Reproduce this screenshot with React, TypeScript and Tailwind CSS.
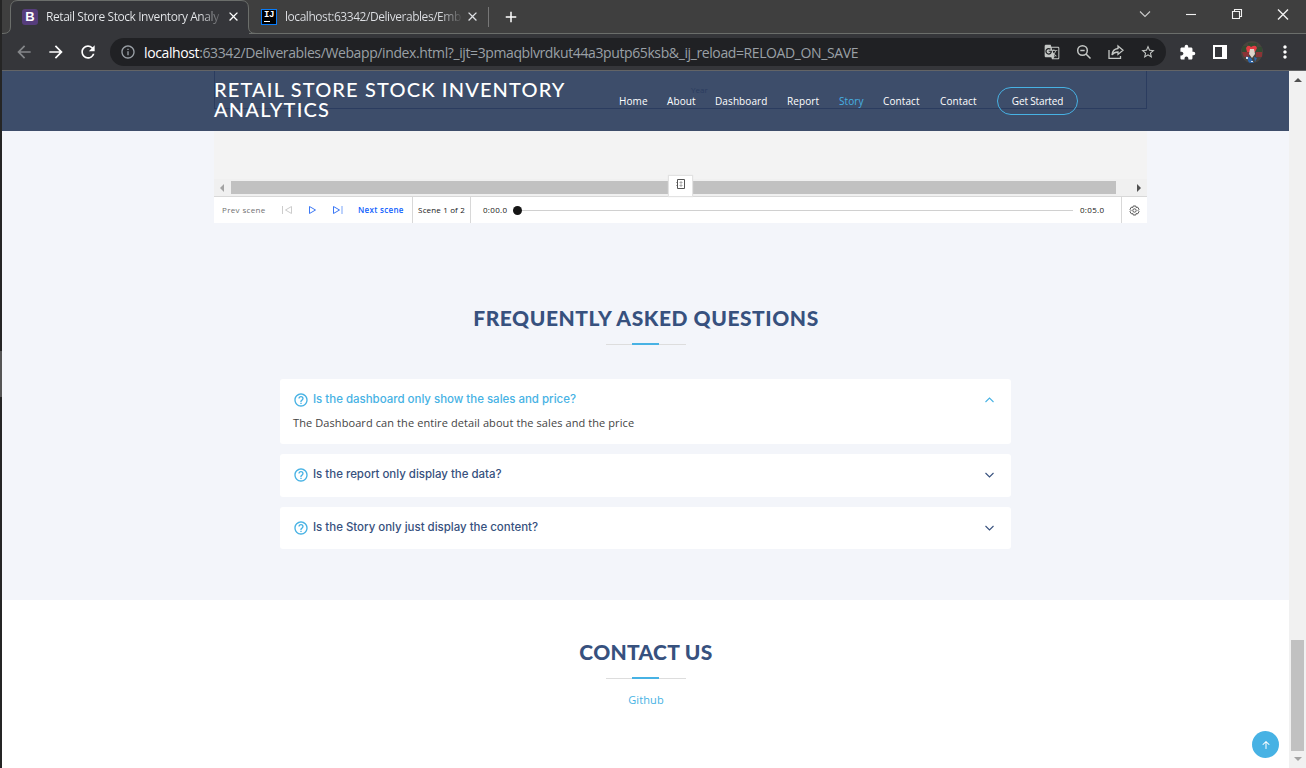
import React from "react";
import {
  BsArrowUpShort,
} from "react-icons/bs";
import { BiHelpCircle } from "react-icons/bi";
import {
  MdArrowBack,
  MdArrowForward,
  MdRefresh,
  MdInfoOutline,
  MdGTranslate,
  MdStarBorder,
  MdExtension,
  MdMoreVert,
  MdClose,
  MdAdd,
} from "react-icons/md";

const sans = "font-['Open_Sans',sans-serif]";

function Tabs() {
  return (
    <div className="flex h-[34px] shrink-0 bg-[#3f3f3f]">
      <svg className="h-[34px] w-[258px] shrink-0 -mr-[258px]" viewBox="0 0 258 34" fill="#35363a" stroke="#6b6e6b">
        <path d="M-2 33.5H1Q8.500 33.500 8.500 27V8Q8.500 .5 16 .5H239Q246.500 .5 246.500 8V27Q246.500 33.500 254 33.500H258V36H-2Z" />
      </svg>
      <div className="relative flex h-[33px] w-[247px] shrink-0 items-center pl-5">
        <div className="flex h-4 w-4 items-center justify-center rounded-[3px] bg-[#563d7c] font-['Liberation_Sans',sans-serif] text-[13px] font-bold text-white">B</div>
        <div className="ml-2 w-[176px] whitespace-nowrap bg-gradient-to-r from-[#e8eaed] from-88% to-[#e8eaed]/10 bg-clip-text text-[12px] tracking-[-0.43px] text-transparent">Retail Store Stock Inventory Analy</div>
        <MdClose className="ml-[4px] h-[15px] w-[15px] text-white" />
      </div>
      <div className="flex flex-1 items-center border-b border-[#6b6e6b]">
        <div className="ml-[12px] flex h-4 w-4 flex-col border border-[#087cfa] bg-black pl-[2px] pt-px font-['Liberation_Mono',monospace] text-[9px] font-bold leading-[9px] text-white">
          <span className="tracking-[-0.5px]">IJ</span>
          <span className="mt-px h-px w-[6px] bg-white" />
        </div>
        <div className="ml-2 w-[176px] whitespace-nowrap bg-gradient-to-r from-[#dfe1e5] from-88% to-[#dfe1e5]/10 bg-clip-text text-[12px] tracking-[-0.45px] text-transparent">localhost:63342/Deliverables/Emb</div>
        <MdClose className="ml-[4px] h-[15px] w-[15px] text-[#dfe1e5]" />
        <div className="ml-[8px] h-5 w-px bg-[#777]" />
        <MdAdd className="ml-[13px] h-[18px] w-[18px] text-white" />
        <svg className="ml-auto mr-[17px] mb-[5px] h-4 w-[152px]" viewBox="0 0 152 16" fill="none" stroke="#f1f1f1" strokeWidth="1.1">
          <path d="M3 5.500l5 5 5-5" stroke="#ccc" />
          <path d="M49 8.500h10" />
          <path d="M95.500 5.500h7v7h-7zM97.500 5.500v-2h7v7h-2" />
          <path d="M141 3.500l10 10M151 3.500l-10 10" strokeWidth="1.400" />
        </svg>
      </div>
    </div>
  );
}

function Toolbar() {
  return (
    <div className="flex h-[37px] shrink-0 items-center border-b border-[#636466] bg-[#35363a] pl-3">
      <MdArrowBack className="h-5 w-5 text-[#85878a]" />
      <MdArrowForward className="ml-3 h-5 w-5 text-white" />
      <MdRefresh className="ml-3 h-5 w-5 text-white" />
      <div className="ml-[12px] flex h-7 w-[1056px] items-center rounded-full bg-[#202124] pl-[10px] pr-[10px] text-[#9aa0a6]">
        <MdInfoOutline className="h-4 w-4" />
        <div className="ml-[8px] whitespace-nowrap text-[14px] tracking-[-0.39px]">
          <span className="text-white">localhost</span>:63342/Deliverables/Webapp/index.html?_ijt=3pmaqblvrdkut44a3putp65ksb&amp;_ij_reload=RELOAD_ON_SAVE
        </div>
        <div className="ml-auto flex items-center gap-4 text-[#c4c7c5]">
          <MdGTranslate className="h-4 w-4" />
          <svg className="h-4 w-4" viewBox="0 0 16 16" fill="none" stroke="currentColor" strokeWidth="1.500">
            <circle cx="6.500" cy="6.500" r="4.800" />
            <path d="M10 10l4.500 4.500M4.300 6.500h4.400" />
          </svg>
          <svg className="h-4 w-4" viewBox="0 0 16 16" fill="none" stroke="currentColor" strokeWidth="1.300">
            <path d="M1 6v8.300h11.500V12" />
            <path d="M10 2l5 4.200-5 4.200V8Q6 8 4 11Q4.500 5 10 4.500Z" />
          </svg>
          <MdStarBorder className="h-4 w-4" />
        </div>
      </div>
      <MdExtension className="ml-[13px] h-[17px] w-[17px] text-white" />
      <div className="ml-[17px] h-[14px] w-[14px] border-2 border-r-[5px] border-white" />
      <svg className="ml-[14px] h-[22px] w-[22px] rounded-full" viewBox="0 0 22 22">
        <path fill="#48443e" d="M0 0h22v22H0z" />
        <path fill="#334a32" d="M1 5h6V2h9v4h5v5H1z" />
        <path fill="#8a3436" d="M1 11h7v5H3zM15 11h6v5h-6z" />
        <path fill="#e33c43" d="M5 7q2-4 5-1q5-3 6 1l-2 4H6z" />
        <path fill="#ddd5ca" d="M9 8h4l1 5-3 4-3-4z" />
        <path fill="#2d67ad" d="M5 15l5 2 3 5H8zM13 16l3 1-2 4z" />
        <path fill="#d9e5ee" d="M5 16h2v2H5zM10 20h2v1h-2z" />
      </svg>
      <MdMoreVert className="ml-[12px] h-5 w-5 text-white" />
    </div>
  );
}

function Divider() {
  return (
    <div className="flex h-[3px] w-20 items-center">
      <div className="h-px w-[26px] bg-[#ddd]" />
      <div className="-mt-px h-[2px] w-[27px] bg-[#47b2e4]" />
      <div className="h-px w-[27px] bg-[#ddd]" />
    </div>
  );
}

function Header() {
  return (
    <header className="relative flex h-[60px] bg-[#3d4d6a] text-white">
      <div className="absolute left-[212px] top-0 h-[38px] w-[933px] border border-t-0 border-[#2b3c5f]" />
      <div className="absolute left-[689px] top-[14px] text-[8px] leading-[10px] text-[#2b3c5f]">Year</div>
      <h1 className="relative ml-[212px] mt-[8px] w-[405px] whitespace-nowrap font-['Lato',sans-serif] text-[20px] font-medium leading-[20px] tracking-[1.15px]">
        RETAIL STORE STOCK INVENTORY<br /><span className="tracking-[1.2px]">ANALYTICS</span>
      </h1>
      <nav className="relative mt-[23px] flex h-[14px] whitespace-nowrap text-[10px] font-medium leading-[14px] tracking-[0.1px]">
        <a className="w-[48px]">Home</a>
        <a className="w-[48px]">About</a>
        <a className="w-[72px]">Dashboard</a>
        <a className="w-[52px]">Report</a>
        <a className="w-[44px] text-[#47b2e4]">Story</a>
        <a className="w-[57px]">Contact</a>
        <a className="w-[57px]">Contact</a>
      </nav>
      <a className="relative mt-[16px] flex h-7 w-[81px] items-center justify-center rounded-full border border-[#47b2e4] text-[10px] font-medium tracking-[-0.15px]">Get Started</a>
    </header>
  );
}

function Player() {
  return (
    <div className="ml-[212px] w-[933px]">
      <div className="h-[48px] bg-[#f3f3f3]" />
      <div className="relative flex h-[17px] items-center bg-[#f0f0f0]">
        <div className="ml-[6px] border-y-4 border-r-[4px] border-y-transparent border-r-[#a3a3a3]" />
        <div className="ml-[7px] h-[13px] w-[885px] bg-[#c1c1c1]" />
        <div className="ml-[21px] border-y-4 border-l-[4px] border-y-transparent border-l-[#505050]" />
        <div className="absolute -top-[3px] left-[455px] flex h-[20px] w-[23px] items-start justify-center bg-white pt-[3px] shadow-[0_0_1px_1px_#e2e2e2]">
          <svg className="h-[10px] w-[9px]" viewBox="0 0 9 10" fill="none" stroke="#555">
            <path d="M1.500 .5h7v9h-7z" />
            <path d="M3.500 3.500h3M3.500 6.500h3M5 2v6M0 3.500h1M0 6.500h1" stroke="#aaa" />
          </svg>
        </div>
      </div>
      <div className="flex h-[27px] items-center whitespace-nowrap border-t border-[#d8d8d8] bg-white text-[8px] font-medium text-[#161616]">
        <span className="ml-[8px] w-[60px] tracking-[0.35px] text-[#6f6f6f]">Prev scene</span>
        <svg className="h-[10px] w-[64px]" viewBox="0 0 64 10" fill="none" strokeWidth="1">
          <path d="M.5 1v8M9.500 1.500v7L3.500 5z" stroke="#ccc" />
          <path d="M27.500 1.500v7l6-3.500z" stroke="#3b78f6" />
          <path d="M51.500 1.500v7l6-3.500z" stroke="#3b78f6" />
          <path d="M60 1v8" stroke="#a6c3fb" strokeWidth="1.500" />
        </svg>
        <span className="ml-[12px] w-[54px] font-semibold tracking-[0.3px] text-[#0f62fe]">Next scene</span>
        <span className="flex h-full w-[59px] items-center justify-center border-x border-[#d8d8d8] tracking-[0.15px]">Scene 1 of 2</span>
        <span className="ml-[12px] w-[30px] tracking-[0.3px]">0:00.0</span>
        <span className="h-[9px] w-[9px] rounded-full bg-[#161616]" />
        <span className="h-px w-[551px] bg-[#d0d0d0]" />
        <span className="ml-[7px] tracking-[0.3px]">0:05.0</span>
        <span className="ml-auto flex h-full w-[26px] items-center justify-center border-l border-[#d8d8d8]">
          <svg className="h-[11px] w-[11px]" viewBox="0 0 11 11" fill="none" stroke="#555">
            <path d="M4.200 1h2.600l.4 1.500 1.500-.3 1.300 2.200L9 5.500l1 1.100-1.300 2.200-1.500-.3-.4 1.500H4.200l-.4-1.500-1.500.3L1 6.600l1-1.100-1-1.100 1.300-2.200 1.500.3z" />
            <circle cx="5.500" cy="5.500" r="1.700" />
          </svg>
        </span>
      </div>
    </div>
  );
}

interface QuestionProps {
  children: React.ReactNode;
  height: string;
  answer?: string;
}

function Question({ children, height, answer }: QuestionProps) {
  return (
    <div className={`rounded-[3px] bg-white px-[13px] pt-[12px] ${height}`}>
      <div className={answer ? "flex h-[18px] items-center text-[#47b2e4]" : "flex h-[18px] items-center text-[#37517e]"}>
        <BiHelpCircle className="h-4 w-4 shrink-0 text-[#47b2e4]" />
        <span className="mb-[2px] ml-1 font-['Inter',sans-serif] text-[11.5px] font-medium leading-[18px] tracking-[-0.02px]">{children}</span>
        <svg className="ml-auto mr-[4px] mb-[1px] h-[6px] w-[9px]" viewBox="0 0 9 6" fill="none" stroke="currentColor" strokeWidth="1.1">
          <path d={answer ? "M.5 5l4-4 4 4" : "M.5 1l4 4 4-4"} />
        </svg>
      </div>
      {answer && <p className="mt-[6px] text-[11px] leading-[16px] tracking-[0.09px] text-[#444]">{answer}</p>}
    </div>
  );
}

export default function App() {
  return (
    <div className={`flex h-[768px] w-[1306px] overflow-hidden bg-[#35363a] ${sans}`}>
      <div className="flex w-[2px] shrink-0 flex-col bg-[#252525]">
        <div className="mt-[351px] h-[46px] bg-[#555]" />
      </div>
      <div className="flex w-[1304px] flex-col">
        <Tabs />
        <Toolbar />
        <div className="flex flex-1 bg-white">
          <main className="relative w-[1287px]">
            <Header />
            <section className="h-[469px] bg-[#f3f5fa]">
              <Player />
              <div className="flex flex-col items-center pl-px pt-[81px]">
                <h2 className="h-[28px] whitespace-nowrap font-['Lato',sans-serif] text-[21px] font-black leading-[28px] tracking-[0.55px] text-[#37517e]">FREQUENTLY ASKED QUESTIONS</h2>
                <div className="mt-[11px]"><Divider /></div>
              </div>
              <div className="ml-[278px] mt-[33px] flex w-[731px] flex-col gap-[10px]">
                <Question height="h-[65px]" answer="The Dashboard can the entire detail about the sales and the price">Is the dashboard only show the sales and price?</Question>
                <Question height="h-[43px]">Is the report only display the data?</Question>
                <Question height="h-[42px]">Is the Story only just display the content?</Question>
              </div>
            </section>
            <section className="flex flex-col items-center pl-px pt-[38px]">
              <h2 className="h-[28px] whitespace-nowrap font-['Lato',sans-serif] text-[21px] font-black leading-[28px] tracking-[0.3px] text-[#37517e]">CONTACT US</h2>
              <div className="mt-[11px]"><Divider /></div>
              <a className="mt-[12px] text-[11px] leading-[16px] tracking-[0.1px] text-[#47b2e4]">Github</a>
            </section>
            <button className="absolute bottom-[10px] right-[10px] flex h-[27px] w-[27px] items-center justify-center rounded-full bg-[#47b2e4] text-white">
              <BsArrowUpShort className="h-4 w-4" />
            </button>
          </main>
          <div className="flex w-[17px] flex-col items-center bg-[#f1f1f1]">
            <div className="mt-[7px] border-x-4 border-b-4 border-x-transparent border-b-[#505050]" />
            <div className="mt-[558px] h-[111px] w-[13px] bg-[#c1c1c1]" />
            <div className="mt-[6px] border-x-4 border-t-4 border-x-transparent border-t-[#a3a3a3]" />
          </div>
        </div>
      </div>
    </div>
  );
}
